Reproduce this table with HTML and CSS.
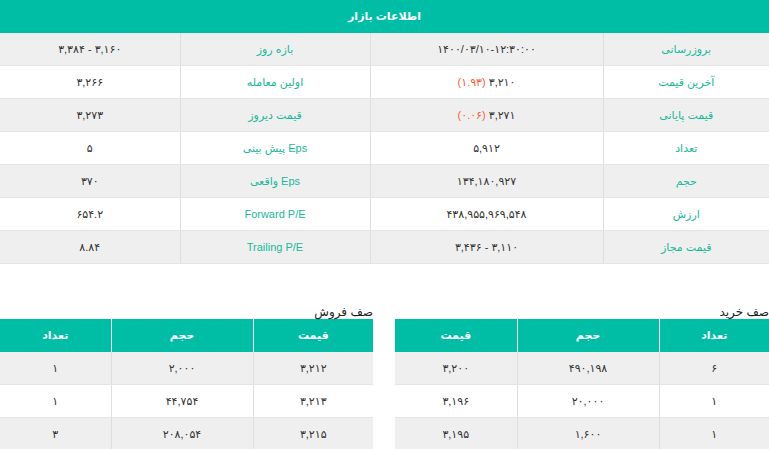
FILE: index.html
```html
<!DOCTYPE html>
<html lang="fa" dir="rtl">
<head>
<meta charset="utf-8">
<title>اطلاعات بازار</title>
<link rel="stylesheet" href="styles.css">
</head>
<body>
<div class="page">
  <table class="market">
    <colgroup>
      <col class="c-l1"><col class="c-v1"><col class="c-l2"><col class="c-v2">
    </colgroup>
    <thead>
      <tr><th colspan="4">اطلاعات بازار</th></tr>
    </thead>
    <tbody>
      <tr><td class="lbl">بروزرسانی</td><td>۱۴۰۰/۰۳/۱۰-۱۲:۳۰:۰۰</td><td class="lbl">بازه روز</td><td>۳,۱۶۰ - ۳,۳۸۴</td></tr>
      <tr><td class="lbl">آخرین قیمت</td><td>۳,۲۱۰ <span class="neg">(۱.۹۳)</span></td><td class="lbl">اولین معامله</td><td>۳,۲۶۶</td></tr>
      <tr><td class="lbl">قیمت پایانی</td><td>۳,۲۷۱ <span class="neg">(۰.۰۶)</span></td><td class="lbl">قیمت دیروز</td><td>۳,۲۷۳</td></tr>
      <tr><td class="lbl">تعداد</td><td>۵,۹۱۲</td><td class="lbl">Eps پیش بینی</td><td>۵</td></tr>
      <tr><td class="lbl">حجم</td><td>۱۳۴,۱۸۰,۹۲۷</td><td class="lbl">Eps واقعی</td><td>۳۷۰</td></tr>
      <tr><td class="lbl">ارزش</td><td>۴۳۸,۹۵۵,۹۶۹,۵۴۸</td><td class="lbl">Forward P/E</td><td>۶۵۴.۲</td></tr>
      <tr><td class="lbl">قیمت مجاز</td><td>۳,۱۱۰ - ۳,۴۳۶</td><td class="lbl">Trailing P/E</td><td>۸.۸۴</td></tr>
    </tbody>
  </table>

  <div class="queues">
    <section class="queue">
      <div class="q-title">صف خرید</div>
      <table class="qt">
        <colgroup><col class="qc-a"><col class="qc-b"><col></colgroup>
        <thead><tr><th>تعداد</th><th>حجم</th><th>قیمت</th></tr></thead>
        <tbody>
          <tr><td>۶</td><td>۴۹۰,۱۹۸</td><td>۳,۲۰۰</td></tr>
          <tr><td>۱</td><td>۲۰,۰۰۰</td><td>۳,۱۹۶</td></tr>
          <tr><td>۱</td><td>۱,۶۰۰</td><td>۳,۱۹۵</td></tr>
        </tbody>
      </table>
    </section>
    <section class="queue">
      <div class="q-title">صف فروش</div>
      <table class="qt">
        <colgroup><col class="qc-c"><col class="qc-b"><col></colgroup>
        <thead><tr><th>قیمت</th><th>حجم</th><th>تعداد</th></tr></thead>
        <tbody>
          <tr><td>۳,۲۱۲</td><td>۲,۰۰۰</td><td>۱</td></tr>
          <tr><td>۳,۲۱۳</td><td>۴۴,۷۵۴</td><td>۱</td></tr>
          <tr><td>۳,۲۱۵</td><td>۲۰۸,۰۵۴</td><td>۳</td></tr>
        </tbody>
      </table>
    </section>
  </div>
</div>
</body>
</html>
```

FILE: styles.css
```css
html, body {
  margin: 0;
  padding: 0;
  background: #ffffff;
}
body {
  direction: rtl;
  font-family: "Liberation Sans", "DejaVu Sans", sans-serif;
  font-size: 11px;
  color: #333333;
}
.page {
  width: 769px;
}
table {
  border-collapse: collapse;
  table-layout: fixed;
  width: 100%;
}
.market th {
  background: #00bea6;
  color: #ffffff;
  font-weight: bold;
  font-size: 11px;
  height: 33px;
  padding: 0;
  text-align: center;
}
.market td {
  height: 32px;
  padding: 0;
  text-align: center;
  border-left: 1px solid #dedede;
  border-bottom: 1px solid #e4e4e4;
  color: #333333;
}
.market td:last-child { border-left: none; }
.market tbody tr:nth-child(odd) td { background: #efefef; }
.market tbody tr:nth-child(even) td { background: #ffffff; }
.market td.lbl { color: #17b99b; }
.c-l1 { width: 166px; }
.c-v1 { width: 233px; }
.c-l2 { width: 190px; }
.c-v2 { width: 180px; }
.neg { color: #ff5a36; }

.queues {
  display: grid;
  grid-template-columns: 374px 373px;
  column-gap: 22px;
  margin-top: 41px;
}
.q-title {
  font-size: 12px;
  color: #222222;
  line-height: 14px;
  text-align: right;
}
.qt th {
  background: #00bea6;
  color: #ffffff;
  font-weight: bold;
  height: 33px;
  padding: 0;
  text-align: center;
  border-left: 1px solid #ffffff;
}
.qt th:last-child { border-left: none; }
.qt td {
  height: 32px;
  padding: 0;
  text-align: center;
  border-left: 1px solid #dedede;
  border-bottom: 1px solid #e4e4e4;
}
.qt td:last-child { border-left: none; }
.qt tbody tr:nth-child(odd) td { background: #efefef; }
.qt tbody tr:nth-child(even) td { background: #ffffff; }
.qc-a { width: 110px; }
.qc-b { width: 142px; }
.qc-c { width: 120px; }
```
